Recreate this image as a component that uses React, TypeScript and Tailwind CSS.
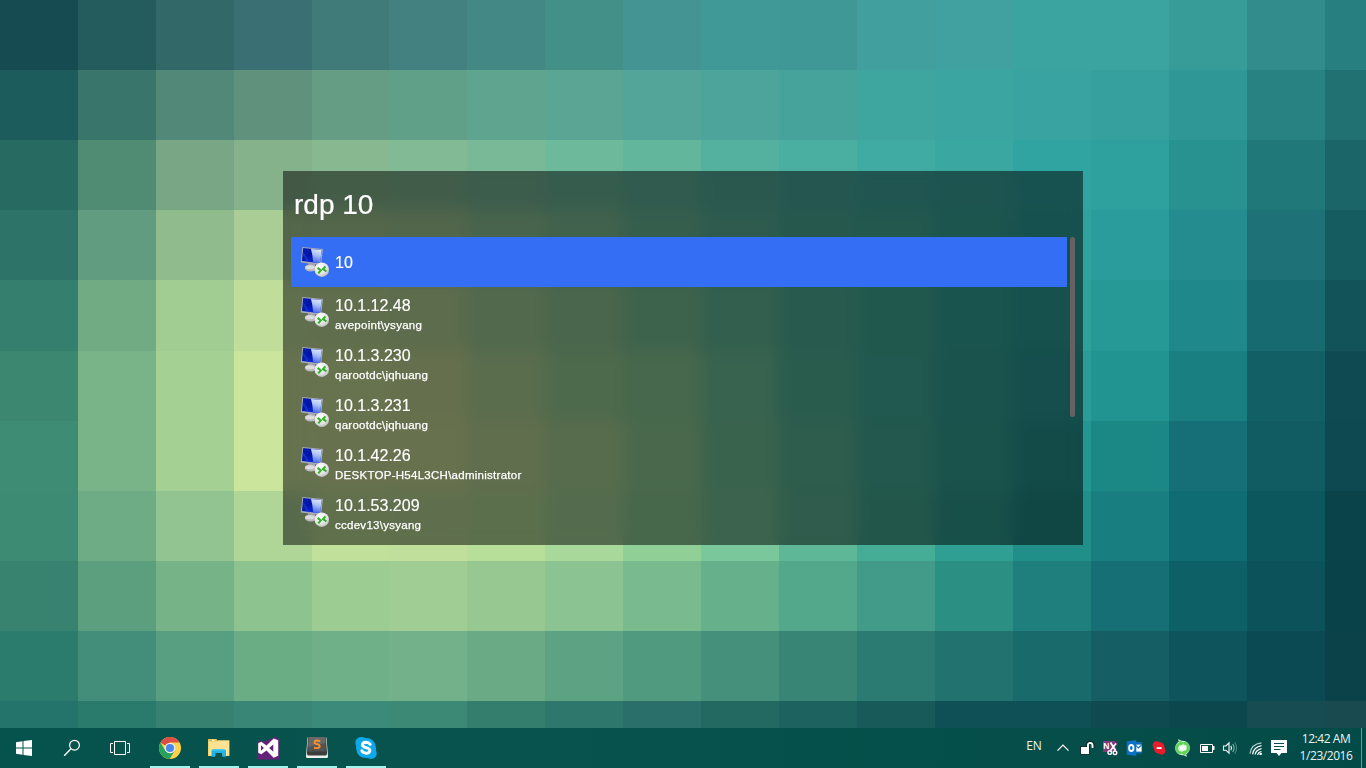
import React from "react";

const wallpaper: string[][] = [
  ["#164c51", "#245c5d", "#336868", "#3a7073", "#407b79", "#42817f", "#448885", "#439089", "#449494", "#409996", "#409896", "#41a09e", "#40a1a0", "#3ba4a0", "#3ca4a0", "#379c98", "#318c8b", "#277f7f"],
  ["#1d5c5c", "#3a756b", "#528877", "#60917c", "#649c84", "#61a088", "#5ea48f", "#5aa594", "#54a599", "#4ca49a", "#46a39b", "#3fa69f", "#3ba5a1", "#38a3a0", "#35a09e", "#2f9796", "#298282", "#217172"],
  ["#266a61", "#508b74", "#79a684", "#86b28b", "#87b890", "#82ba95", "#79b998", "#6cb99b", "#61b69c", "#55b19f", "#4aafa1", "#40aba3", "#3aa8a1", "#30a4a0", "#2ea19f", "#289291", "#217879", "#1b6568"],
  ["#2d7368", "#629c80", "#90bc8d", "#a9cd94", "#a8ce94", "#a4cc96", "#90c898", "#82c49a", "#6cbc9a", "#5cb69c", "#4cb09c", "#44b09c", "#38a89c", "#2fa39e", "#299c9b", "#248c8f", "#1d7177", "#155c60"],
  ["#357f6f", "#70ab84", "#a2cd92", "#c0de9a", "#c0dc9a", "#b8d898", "#a4d29a", "#94cc98", "#7cc698", "#66be9c", "#50b69c", "#42b09c", "#34a89c", "#2ca29a", "#269997", "#1e888a", "#176b70", "#115359"],
  ["#3b8770", "#79b388", "#a4d094", "#cce59d", "#cfe59c", "#ccdf9a", "#b4da9a", "#9cd498", "#8ed098", "#6fc69e", "#54b89c", "#42b09e", "#34a69c", "#2a9c98", "#219391", "#197f81", "#135f66", "#0f4a52"],
  ["#3f8c75", "#79b388", "#a4d094", "#cce59d", "#d0e39c", "#d0e29c", "#c0dc9a", "#aed898", "#94d298", "#74c69a", "#5cba9a", "#44b09c", "#34a698", "#249691", "#1b8886", "#166f76", "#115b63", "#0e4850"],
  ["#3e8b74", "#6dac84", "#91c490", "#afd597", "#c1e19a", "#bfdf9a", "#b7df9a", "#a8d99a", "#90d097", "#79c79a", "#5eb898", "#45ad96", "#2f9e93", "#208e89", "#197e80", "#106c73", "#0c565e", "#0a434a"],
  ["#388270", "#5b9f7f", "#76b387", "#8dc38e", "#9dcc93", "#a0cd93", "#97c892", "#8bc492", "#79ba8f", "#66b18c", "#53a78b", "#419b88", "#2c8f83", "#1f7f7d", "#166f74", "#0e6067", "#0b525a", "#0a4249"],
  ["#2c7c6e", "#438e7a", "#579f80", "#6aac84", "#70b088", "#72b18a", "#6aab86", "#5da282", "#509a7f", "#45907b", "#398575", "#2c7b72", "#22726f", "#186a6b", "#155f64", "#0e545c", "#0b4a52", "#0b4148"],
  ["#24746b", "#2b7b6c", "#368170", "#3a8676", "#3c8a79", "#3c8976", "#347e6e", "#2d776c", "#2a6f69", "#236962", "#1d625f", "#175a59", "#0f5057", "#0f5057", "#0e4a50", "#0c474d", "#164c52", "#194a50"],
];

const results = [
  { title: "10" },
  { title: "10.1.12.48", sub: "avepoint\\ysyang" },
  { title: "10.1.3.230", sub: "qarootdc\\jqhuang" },
  { title: "10.1.3.231", sub: "qarootdc\\jqhuang" },
  { title: "10.1.42.26", sub: "DESKTOP-H54L3CH\\administrator" },
  { title: "10.1.53.209", sub: "ccdev13\\ysyang" },
];

function Wallpaper() {
  return (
    <div className="absolute inset-0 grid grid-cols-[78px_78px_77.6px_78px_77.6px_77.9px_78.1px_repeat(11,77.98px)] grid-rows-[repeat(11,70.12px)] overflow-hidden">
      {wallpaper.flatMap((row, r) =>
        row.map((color, c) => <div key={`${r}-${c}`} style={{ backgroundColor: color }} />)
      )}
    </div>
  );
}

function RdpIcon() {
  return (
    <svg width="32" height="32" viewBox="0 0 32 32" className="shrink-0">
      <defs>
        <linearGradient id="scr" x1="0" y1="0" x2="0.6" y2="1">
          <stop offset="0" stopColor="#0420b8" />
          <stop offset="0.5" stopColor="#0214a4" />
          <stop offset="1" stopColor="#0a2ee0" />
        </linearGradient>
        <linearGradient id="shine" x1="0.6" y1="0" x2="0.4" y2="1">
          <stop offset="0" stopColor="#dfe9ff" />
          <stop offset="0.45" stopColor="#a5bcf7" />
          <stop offset="1" stopColor="#3f62e6" />
        </linearGradient>
        <radialGradient id="ball" cx="0.4" cy="0.3" r="0.8">
          <stop offset="0" stopColor="#ffffff" />
          <stop offset="0.6" stopColor="#e4e4e4" />
          <stop offset="1" stopColor="#b0b0b0" />
        </radialGradient>
      </defs>
      <path d="M9 16 L16 17 L16 22 L9 21 Z" fill="#9c9da4" />
      <ellipse cx="11.8" cy="22" rx="6" ry="3.4" fill="#b8b8bd" />
      <ellipse cx="10.8" cy="21.2" rx="4.6" ry="2" fill="#dcdcdf" />
      <path d="M3.4 1 L24 3 L22 19 L1.8 16.4 Z" fill="#a6aab8" />
      <path d="M4.2 2.1 L22.7 3.9 L21 17.3 L3 15.1 Z" fill="url(#scr)" />
      <path d="M12 2.9 L22.7 3.9 L21 17.3 L14.2 16.5 Q13.8 9 12 2.9 Z" fill="url(#shine)" />
      <path d="M3.9 6 Q8 9 9.6 15.9 L7 15.6 Q6 11 3.6 8.8 Z" fill="#1a40d8" opacity="0.6" />
      <circle cx="22.8" cy="23.7" r="7.2" fill="url(#ball)" />
      <path d="M18.6 21.9 L21.8 24.4 L19.3 27.4" fill="none" stroke="#30b327" strokeWidth="2" />
      <path d="M26.4 20.4 L24 23 L27.4 25.3" fill="none" stroke="#30b327" strokeWidth="2" />
    </svg>
  );
}

function Launcher() {
  return (
    <div className="mt-[171px] flex h-[374px] w-[800px] flex-col bg-black/50 font-['Liberation_Sans',Arial,sans-serif] text-white backdrop-blur-[8px]">
      <div className="flex h-[66px] items-center pt-[2px] pl-[11px] text-[28px] leading-none [-webkit-text-stroke:0.2px_white]">rdp 10</div>
      <div className="flex gap-[3px] pl-2">
        <div className="w-[776px]">
          {results.map((item, i) => (
            <div
              key={i}
              className={
                i === 0
                  ? "flex h-[50px] items-center bg-[#346ef5] pl-2"
                  : "flex h-[50px] items-center pl-2"
              }
            >
              <RdpIcon />
              <div className={item.sub ? "flex flex-col pt-[7px] pl-1" : "flex flex-col pt-px pl-1"}>
                <span className="text-[16px] leading-[20px] [-webkit-text-stroke:0.15px_white]">{item.title}</span>
                {item.sub && (
                  <span className="text-[11.5px] leading-[19px] tracking-[0.27px] [-webkit-text-stroke:0.25px_white]">{item.sub}</span>
                )}
              </div>
            </div>
          ))}
        </div>
        <div className="h-[180px] w-[5px] rounded-full bg-[#666263]" />
      </div>
    </div>
  );
}

function AppButton({ children }: { children: React.ReactNode }) {
  return (
    <div className="flex h-10 w-10 flex-col items-center border-b-2 border-[#a3f4ec]">
      <svg width="24" height="24" viewBox="0 0 24 24" className="mt-[8px]">
        {children}
      </svg>
    </div>
  );
}

function Taskbar() {
  return (
    <div className="flex h-10 w-full items-stretch bg-linear-to-r from-[#06524c] via-[#08534d] via-40% to-[#034b47]">
      <div className="flex w-12 items-center justify-center">
        <svg width="16" height="16" viewBox="0 0 16 16" fill="#fff">
          <path d="M0 2.2 L6.5 1.2 V7.5 H0 Z M7.5 1.1 L16 0 V7.5 H7.5 Z M0 8.5 H6.5 V14.8 L0 13.8 Z M7.5 8.5 H16 V16 L7.5 14.9 Z" />
        </svg>
      </div>
      <div className="flex w-12 items-center justify-center">
        <svg width="18" height="18" viewBox="0 0 18 18" fill="none" stroke="#fff" strokeWidth="1.2">
          <circle cx="11.5" cy="6.2" r="4.9" />
          <path d="M8 9.8 L1.2 16.7" strokeWidth="1.4" />
        </svg>
      </div>
      <div className="flex w-12 items-center justify-center">
        <svg width="20" height="14" viewBox="0 0 20 14" fill="none" stroke="#fff" strokeWidth="1">
          <path d="M4.5 0.5 H15.5 V13.5 H4.5 Z M3 2.5 H0.5 V11.5 H3 M17 2.5 H19.5 V11.5 H17" />
        </svg>
      </div>

      <div className="flex gap-[9px] pl-1.5">
        <AppButton>
          <circle cx="12" cy="12" r="11" fill="#fcd14d" />
          <path d="M12 12 L2.5 6.5 A11 11 0 0 1 21.5 6.5 L12 6.5 Z" fill="#dc4f42" />
          <path d="M2.5 6.5 A11 11 0 0 0 11.6 23 L16.6 14.7 L12 17 L7.4 14.7 Z" fill="#25a25c" />
          <path d="M12 12 L2.5 6.5 L3.7 4.8 L12 6.5 Z" fill="#dc4f42" />
          <circle cx="12" cy="12" r="5.3" fill="#f1f1f1" />
          <circle cx="12" cy="12" r="4.1" fill="#4a86ee" />
        </AppButton>
        <AppButton>
          <path d="M1 3 H9.5 L10.5 4.5 H22.5 V20 H1 Z" fill="#efc04a" />
          <rect x="3" y="3.7" width="4.5" height="1.2" fill="#fffbe8" />
          <rect x="3.3" y="3.7" width="1.6" height="1.2" fill="#59b878" />
          <path d="M1.5 5.6 H9.5 L11 4.6 H22 V19.7 H1.5 Z" fill="#fde391" />
          <path d="M4.5 20.8 V14.5 L6 13 H17.5 L19 14.5 V20.8 H15.2 V17 H8.3 V20.8 Z" fill="#1fb4ea" />
          <path d="M6 13 H17.5 L18.6 14.4 H4.9 Z" fill="#4ec9f2" />
          <rect x="8.3" y="17" width="6.9" height="4" fill="#0a534d" />
        </AppButton>
        <AppButton>
          <path d="M1 8 L3 8 L19 1 L23 3 V23.5 H1 Z" fill="#66217a" />
          <path d="M1.2 5.3 H9 L12 8 L18 1.5 L19.5 1 L19 22 L11 16 L6 18 H1.2 Z" fill="#66217a" />
          <path d="M17.6 2.4 L22.2 4.2 V19.8 L17.6 21.8 L10.5 14.5 L5.3 18.3 L2.2 16.8 V7.2 L5.3 5.7 L10.5 9.6 Z M17.3 8.4 L13.1 12 L17.3 15.7 Z M5 9.3 V14.7 L7.9 12 Z" fill="#fff" fillRule="evenodd" />
        </AppButton>
        <AppButton>
          <path d="M2.5 1.5 H21.5 L23 20.5 Q23 22 21.5 22 H2.5 Q1 22 1 20.5 Z" fill="#f1f1ee" />
          <path d="M3 1 H21 L22 16.5 Q22.2 19.5 20.5 19.5 H3.5 Q1.8 19.5 2 16.5 Z" fill="#3d3d3c" />
          <path d="M3.5 1 H20.5 L20.8 15.5 H3.2 Z" fill="#535352" />
          <path d="M3.6 1 H20.4 L20.6 7 L3.3 11 Z" fill="#686867" />
          <path d="M15.2 5.4 Q10.5 3.4 9.5 6 Q9.2 7.7 12 8.2 Q15.2 8.8 14.6 11 Q13.4 13 8.9 11.6" fill="none" stroke="#fb9130" strokeWidth="1.9" />
        </AppButton>
        <AppButton>
          <path d="M7 1 Q9.6 0.8 11.3 2 Q20.8 1.7 22 11.5 Q22 13 21.8 14 Q24 18.6 21 21.5 Q17.8 24 14 22 Q3 22.6 2.1 12.5 L2.2 10 Q0.3 6.5 2.5 3.2 Q4.4 1.1 7 1 Z" fill="#0da9ea" />
          <path d="M16.2 8.3 Q14.8 6.3 12 6.3 Q8.4 6.5 8.5 8.9 Q8.6 10.9 12 11.6 Q16 12.5 15.9 14.8 Q15.5 17.2 12.2 17.2 Q9 17.2 7.8 14.7" fill="none" stroke="#fff" strokeWidth="2.9" strokeLinecap="round" />
        </AppButton>
      </div>

      <div className="ml-auto flex items-center font-['Open_Sans','Noto_Sans',sans-serif] text-[12px] text-[#eaf3f2]">
        <div className="mr-[4px] flex w-6 justify-center pb-1 text-[12px] leading-4 tracking-[-0.2px]">EN</div>
        <svg width="26" height="24" viewBox="0 0 26 24" fill="none" stroke="#fff" strokeWidth="1.2">
          <path d="M7.5 14.7 L13 9.2 L18.5 14.7" />
        </svg>
        <svg width="22" height="24" viewBox="0 0 22 24">
          <path d="M11.8 11 V8.3 Q12 6.2 14.4 6.2 Q17.2 6.4 17.2 9 V12" fill="none" stroke="#132f2d" strokeWidth="3.4" />
          <rect x="4" y="10.4" width="10" height="8.2" fill="#132f2d" />
          <path d="M12 11 V8.7 Q12.2 6.9 14.3 6.9 Q16.5 7.1 16.5 9.2 V12" fill="none" stroke="#fff" strokeWidth="1.9" />
          <rect x="5" y="11" width="8" height="7" fill="#fff" />
        </svg>
        <svg width="24" height="24" viewBox="0 0 24 24">
          <rect x="5" y="5" width="12" height="11" fill="#813a7c" />
          <text x="5.3" y="12.6" fill="#fff" fontSize="8.5" fontWeight="bold" fontFamily="Liberation Sans">N</text>
          <path d="M12 6 L17.5 14.5 M18.5 6.5 L12.5 14.5" stroke="#813a7c" strokeWidth="3.4" />
          <path d="M12.5 6.5 L17.5 14.5 M18 7.5 L12.5 14.5" stroke="#fff" strokeWidth="1.7" />
          <circle cx="11.8" cy="16.6" r="1.8" fill="none" stroke="#fff" strokeWidth="1.4" />
          <circle cx="17" cy="16.8" r="1.8" fill="none" stroke="#fff" strokeWidth="1.4" />
        </svg>
        <svg width="25" height="24" viewBox="0 0 25 24">
          <path d="M12 6 H20 V17.5 H12 Z" fill="#0b69bd" />
          <path d="M13.5 8.6 H19.6 V15.6 H13.5 Z" fill="#fff" />
          <path d="M14 9.5 L16.3 12 L19.5 9" fill="none" stroke="#0b72c6" strokeWidth="1.1" />
          <path d="M4.7 5.5 L14.3 4 V20 L4.7 18.4 Z" fill="#0b72c6" />
          <ellipse cx="9.3" cy="12" rx="2.2" ry="3" fill="none" stroke="#fff" strokeWidth="1.8" />
        </svg>
        <svg width="24" height="24" viewBox="0 0 24 24">
          <path d="M9 5.3 Q10.8 5.2 12 6 Q17.5 6.4 17.6 12 Q19.6 15.4 17.2 17.7 Q14.8 19.3 13 18 Q7.3 18 6.9 12.3 Q4.8 9.5 6.3 7 Q7.4 5.5 9 5.3 Z" fill="#ea1c2c" />
          <rect x="9.6" y="11.2" width="5" height="1.8" fill="#fff" />
        </svg>
        <svg width="23" height="24" viewBox="0 0 23 24" fill="none">
          <circle cx="11.5" cy="12" r="5" stroke="#e5f8e3" strokeWidth="4.6" />
          <path d="M7.5 3.6 L13.6 6.6 L9.5 11 Z M15.5 20.4 L9.4 17.4 L13.5 13 Z" fill="#5fd257" stroke="#e5f8e3" strokeWidth="0.6" />
          <path d="M6.2 15 Q4.4 8.5 10.2 7 M16.8 9 Q18.6 15.5 12.8 17 M12.5 7 Q15.5 7.3 16.8 9 M10.5 17 Q7.5 16.7 6.2 15" stroke="#5fd257" strokeWidth="2.8" />
          <circle cx="11.5" cy="12" r="3" fill="#f2fbf1" />
        </svg>
        <svg width="25" height="24" viewBox="0 0 25 24">
          <path d="M6.5 8.5 H18.5 V16.5 H6.5 Z" fill="none" stroke="#fff" />
          <path d="M8 10 H14 V15 H8 Z M19 10 H20.5 V14 H19 Z" fill="#fff" />
        </svg>
        <svg width="24" height="24" viewBox="0 0 24 24" fill="none" stroke="#fff" strokeWidth="1.1">
          <path d="M4.5 10 H6.9 L10 6.8 V17.2 L6.9 14.2 H4.5 Z" />
          <path d="M11.8 9.9 Q13.3 12 11.8 14.2" />
          <path d="M13.7 8 Q16.5 12 13.7 16" stroke="#8eb4b1" />
          <path d="M15.7 6.3 Q19.5 12 15.7 17.7" stroke="#4d8580" />
        </svg>
        <svg width="25" height="24" viewBox="0 0 25 24" fill="none" stroke="#fff" strokeWidth="1.2">
          <path d="M7 17.8 Q8 8 18.5 6.8" stroke="#b8d0ce" />
          <path d="M9.6 18.3 Q10.6 11 18.5 9.6" />
          <path d="M12.1 18.5 Q13 13.8 18.5 12.6" />
          <path d="M14.6 18.8 Q15.2 16.2 18.5 15.5" />
          <path d="M16.5 17 H18.8 V19 H16.5 Z" fill="#fff" stroke="none" />
        </svg>
        <svg width="22" height="24" viewBox="0 0 22 24">
          <path d="M3 4 H19 V17 H13.5 L11 20 L8.5 17 H3 Z" fill="#fff" />
          <path d="M6 7.5 H16 M6 10.5 H16 M6 13.5 H12.5" stroke="#05504a" strokeWidth="1" />
        </svg>
        <div className="ml-[5px] flex w-[62px] flex-col items-center pb-[2px] text-[12px] leading-[17px] tracking-[-0.45px] whitespace-nowrap">
          <span>12:42 AM</span>
          <span>1/23/2016</span>
        </div>
        <div className="mr-1 ml-1 h-10 w-px bg-[#6a9a95]" />
      </div>
    </div>
  );
}

export default function App() {
  return (
    <div className="relative h-[768px] w-[1366px] overflow-hidden">
      <Wallpaper />
      <div className="relative flex h-full flex-col items-center justify-between">
        <Launcher />
        <Taskbar />
      </div>
    </div>
  );
}
